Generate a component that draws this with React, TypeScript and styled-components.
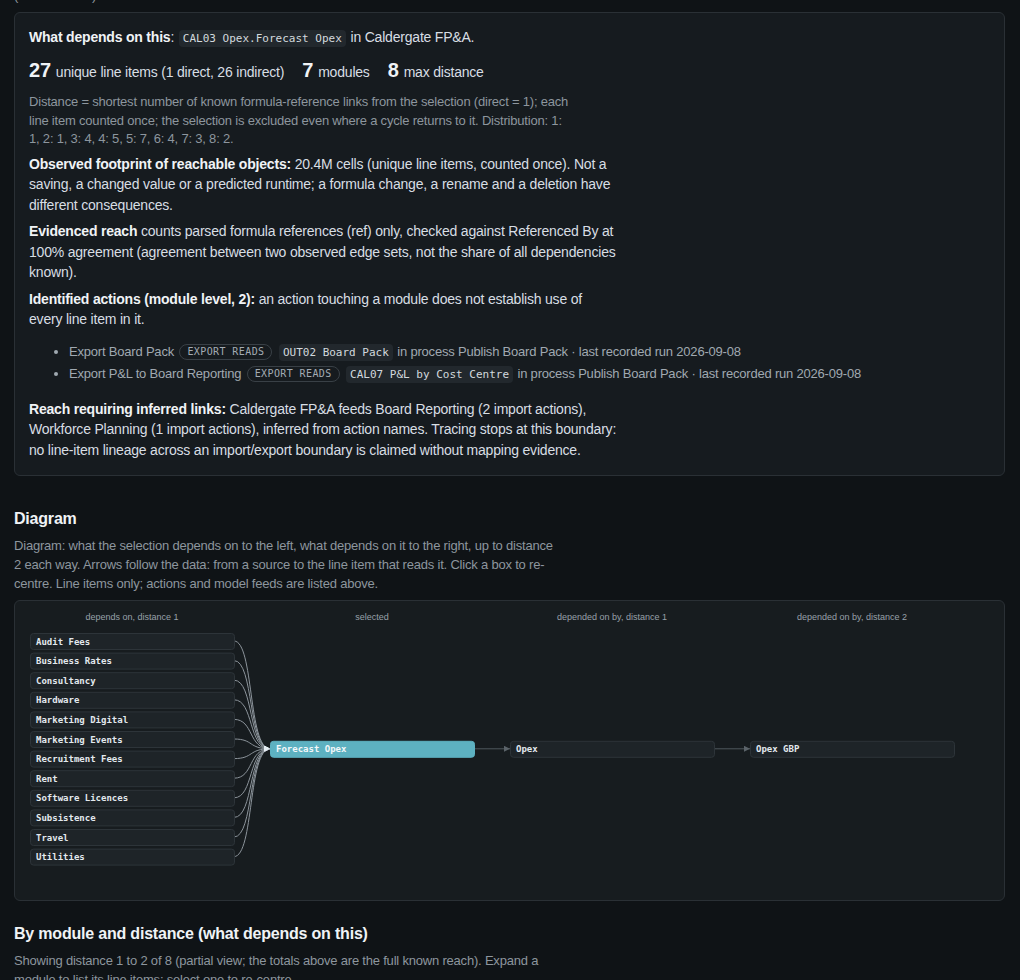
import React from "react";
import styled, { createGlobalStyle } from "styled-components";

const GlobalStyle = createGlobalStyle`
    body {
        margin: 0;
        background: #0f1316;
        color: #d8dee4;
        font-family: "Liberation Sans", Arial, sans-serif;
        font-size: 14px;
        letter-spacing: -0.2px;
    }
`

const upstream = [
    "Audit Fees",
    "Business Rates",
    "Consultancy",
    "Hardware",
    "Marketing Digital",
    "Marketing Events",
    "Recruitment Fees",
    "Rent",
    "Software Licences",
    "Subsistence",
    "Travel",
    "Utilities",
]

const columns = [
    "depends on, distance 1",
    "selected",
    "depended on by, distance 1",
    "depended on by, distance 2",
]

const actions = [
    { name: "Export Board Pack", target: "OUT02 Board Pack" },
    { name: "Export P&L to Board Reporting", target: "CAL07 P&L by Cost Centre" },
]

// diagram geometry
const COL_X = [15, 255, 495, 735]
const BOX_W = 204
const BOX_H = 16
const ROW_TOP = 32
const ROW_STEP = 19.6
const MID_Y = ROW_TOP + ((upstream.length - 1) * ROW_STEP) / 2 + BOX_H / 2

function DependencyDiagram() {
    const rightChain = ["Forecast Opex", "Opex", "Opex GBP"]
    return (
        <DiagramPanel>
            <svg width="100%" height="299" viewBox="0 0 989 299">
                <defs>
                    <marker id="arrowIn" viewBox="0 0 6 6" refX="6" refY="3" markerWidth="6" markerHeight="6" orient="auto">
                        <path d="M0,0 L6,3 L0,6 Z" fill="#e6edf3" />
                    </marker>
                    <marker id="arrowOut" viewBox="0 0 6 6" refX="6" refY="3" markerWidth="6" markerHeight="6" orient="auto">
                        <path d="M0,0 L6,3 L0,6 Z" fill="#5b6369" />
                    </marker>
                </defs>

                {columns.map((label, i) => (
                    <ColumnLabel key={label} x={COL_X[i] + BOX_W / 2} y={19}>
                        {label}
                    </ColumnLabel>
                ))}

                {upstream.map((name, i) => {
                    const cy = ROW_TOP + i * ROW_STEP + BOX_H / 2
                    const x0 = COL_X[0] + BOX_W
                    const x1 = COL_X[1]
                    return (
                        <Edge
                            key={"e" + name}
                            d={`M${x0},${cy} C${x0 + 20},${cy} ${x1 - 22},${MID_Y} ${x1},${MID_Y}`}
                            markerEnd="url(#arrowIn)"
                        />
                    )
                })}

                {upstream.map((name, i) => {
                    const y = ROW_TOP + i * ROW_STEP
                    return (
                        <g key={name}>
                            <NodeBox x={COL_X[0] + 0.5} y={y + 0.5} width={BOX_W} height={BOX_H} rx={3} />
                            <NodeLabel x={COL_X[0] + 6} y={y + 11.5}>{name}</NodeLabel>
                        </g>
                    )
                })}

                {rightChain.slice(1).map((_, i) => (
                    <Link
                        key={"l" + i}
                        d={`M${COL_X[i + 1] + BOX_W},${MID_Y} L${COL_X[i + 2]},${MID_Y}`}
                        markerEnd="url(#arrowOut)"
                    />
                ))}

                {rightChain.map((name, i) => (
                    <g key={name}>
                        <NodeBox
                            $selected={i === 0}
                            x={COL_X[i + 1] + 0.5}
                            y={MID_Y - BOX_H / 2 + 0.5}
                            width={BOX_W}
                            height={BOX_H}
                            rx={3}
                        />
                        <NodeLabel $selected={i === 0} x={COL_X[i + 1] + 6} y={MID_Y + 3.5}>
                            {name}
                        </NodeLabel>
                    </g>
                ))}
            </svg>
        </DiagramPanel>
    )
}

export default function App() {
    return (
        <Page>
            <GlobalStyle />
            <Crumb>(selected item)</Crumb>

            <Card>
                <Lead>
                    <strong>What depends on this</strong>: <Code>CAL03 Opex.Forecast Opex</Code> in Caldergate FP&amp;A.
                </Lead>

                <Stats>
                    <Stat><Num>27</Num>unique line items (1 direct, 26 indirect)</Stat>
                    <Stat><Num>7</Num>modules</Stat>
                    <Stat><Num>8</Num>max distance</Stat>
                </Stats>

                <Note>
                    Distance = shortest number of known formula-reference links from the selection (direct = 1); each
                    line item counted once; the selection is excluded even where a cycle returns to it. Distribution: 1:
                    1, 2: 1, 3: 4, 4: 5, 5: 7, 6: 4, 7: 3, 8: 2.
                </Note>

                <Para $gap={5}>
                    <strong>Observed footprint of reachable objects:</strong> 20.4M cells (unique line items, counted once). Not a
                    saving, a changed value or a predicted runtime; a formula change, a rename and a deletion have
                    different consequences.
                </Para>
                <Para>
                    <strong>Evidenced reach</strong> counts parsed formula references (ref) only, checked against Referenced By at
                    100% agreement (agreement between two observed edge sets, not the share of all dependencies
                    known).
                </Para>
                <Para>
                    <strong>Identified actions (module level, 2):</strong> an action touching a module does not establish use of
                    every line item in it.
                </Para>

                <ActionList>
                    {actions.map(a => (
                        <li key={a.name}>
                            {a.name} <Badge>export reads</Badge> <Code>{a.target}</Code> in process Publish Board Pack · last recorded run 2026-09-08
                        </li>
                    ))}
                </ActionList>

                <Para $gap={14}>
                    <strong>Reach requiring inferred links:</strong> Caldergate FP&amp;A feeds Board Reporting (2 import actions),
                    Workforce Planning (1 import actions), inferred from action names. Tracing stops at this boundary:
                    no line-item lineage across an import/export boundary is claimed without mapping evidence.
                </Para>
            </Card>

            <Section $gap={33}>
                <Heading>Diagram</Heading>
                <Caption>
                    Diagram: what the selection depends on to the left, what depends on it to the right, up to distance
                    2 each way. Arrows follow the data: from a source to the line item that reads it. Click a box to re-centre.
                    Line items only; actions and model feeds are listed above.
                </Caption>
                <DependencyDiagram />
            </Section>

            <Section $gap={23}>
                <Heading>By module and distance (what depends on this)</Heading>
                <Caption $gap={7.5}>
                    Showing distance 1 to 2 of 8 (partial view; the totals above are the full known reach). Expand a
                    module to list its line items; select one to re-centre.
                </Caption>
            </Section>
        </Page>
    )
}

const Page = styled.div`
    padding: 0 15px 40px 14px;
    overflow: hidden;
`

const Crumb = styled.div`
    margin-top: -14px;
    font-size: 13px;
    line-height: 19px;
    color: #8d969e;
`

const Card = styled.div`
    margin-top: 7px;
    background: #161b1f;
    border: 1px solid #2a3035;
    border-radius: 6px;
    padding: 14px 15px 15px 14px;
`

const Lead = styled.p`
    margin: 0;
    line-height: 21px;
    color: #d8dee4;
    strong {
        color: #f0f3f6;
    }
`

const Code = styled.code`
    font-family: "DejaVu Sans Mono", "Liberation Mono", monospace;
    font-size: 11px;
    font-weight: 400;
    letter-spacing: 0;
    padding: 2px 4px;
    border-radius: 4px;
    background: #22282d;
    color: #d3d9de;
    margin: 0 1px;
`

const Stats = styled.div`
    display: flex;
    align-items: baseline;
    gap: 18px;
    margin-top: 7px;
    line-height: 28px;
    color: #d8dee4;
`

const Stat = styled.span`
    font-size: 14px;
`

const Num = styled.span`
    font-size: 20px;
    font-weight: 700;
    color: #f0f3f6;
    margin-right: 5px;
`

const Note = styled.p`
    margin: 7px 0 0;
    max-width: 540px;
    font-size: 13px;
    line-height: 18.5px;
    color: #8d969e;
`

const Para = styled.p<{ $gap?: number }>`
    margin: ${p => p.$gap ?? 6}px 0 0;
    max-width: 588px;
    line-height: 20.5px;
    color: #d8dee4;
    strong {
        color: #f0f3f6;
    }
`

const ActionList = styled.ul`
    margin: 11px 0 0;
    padding-left: 40px;
    font-size: 13px;
    line-height: 21px;
    color: #a0a9b1;
`

const Badge = styled.span`
    display: inline-block;
    padding: 0 7px;
    margin: 0 2px;
    border: 1px solid #394046;
    border-radius: 9px;
    font-family: "DejaVu Sans Mono", "Liberation Mono", monospace;
    font-size: 10px;
    line-height: 14px;
    letter-spacing: 0.4px;
    text-transform: uppercase;
    color: #a3abb3;
    vertical-align: 1px;
`

const Section = styled.section<{ $gap: number }>`
    margin-top: ${p => p.$gap}px;
`

const Heading = styled.h3`
    margin: 0;
    font-size: 16px;
    line-height: 20px;
    font-weight: 700;
    color: #f0f3f6;
`

const Caption = styled.p<{ $gap?: number }>`
    margin: ${p => p.$gap ?? 6.5}px 0 0;
    max-width: 540px;
    font-size: 13px;
    line-height: 19px;
    color: #8d969e;
`

const DiagramPanel = styled.div`
    margin-top: 7px;
    background: #171c1f;
    border: 1px solid #2a3035;
    border-radius: 6px;
    svg {
        display: block;
    }
`

const ColumnLabel = styled.text`
    font-family: "Liberation Sans", Arial, sans-serif;
    font-size: 9px;
    letter-spacing: 0;
    fill: #98a1a9;
    text-anchor: middle;
`

const NodeBox = styled.rect<{ $selected?: boolean }>`
    fill: ${p => (p.$selected ? "#5db1c1" : "#1e2428")};
    stroke: ${p => (p.$selected ? "#5db1c1" : "#2d3439")};
    stroke-width: 1;
`

const NodeLabel = styled.text<{ $selected?: boolean }>`
    font-family: "DejaVu Sans Mono", "Liberation Mono", monospace;
    font-size: 9px;
    font-weight: 600;
    letter-spacing: 0;
    fill: ${p => (p.$selected ? "#f4f8fa" : "#e3e9ee")};
`

const Edge = styled.path`
    fill: none;
    stroke: #8c949b;
    stroke-width: 1;
`

const Link = styled.path`
    fill: none;
    stroke: #4f575d;
    stroke-width: 1;
`
